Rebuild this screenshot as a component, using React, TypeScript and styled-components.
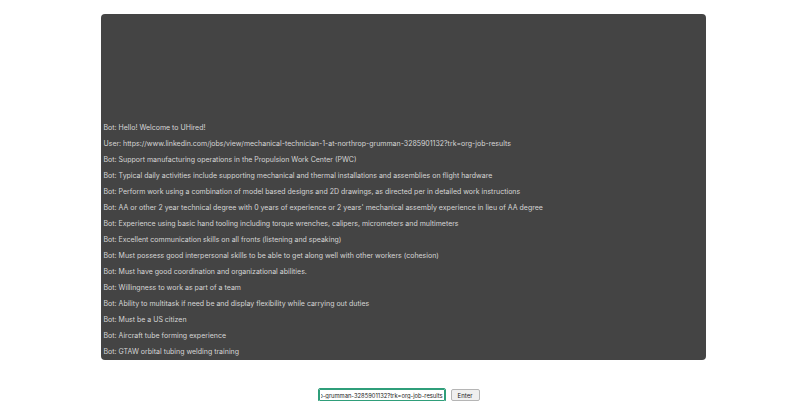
import React from "react";
import styled, { createGlobalStyle } from "styled-components";

const Global = createGlobalStyle`
  html, body { margin: 0; padding: 0; background: #ffffff; }
  body { font-family: "Inter", "Liberation Sans", sans-serif; }
`;

const Page = styled.div`
  display: flex;
  flex-direction: column;
  align-items: center;
  padding-top: 14px;
`;

const ChatPanel = styled.div`
  width: 605px;
  height: 346px;
  box-sizing: border-box;
  background: #444444;
  border-radius: 4px;
  display: flex;
  flex-direction: column;
  justify-content: flex-end;
  padding: 0 3px 0;
  overflow: hidden;
`;

const Message = styled.div`
  font-size: 7px;
  line-height: 16px;
  color: #d6d6d6;
  white-space: nowrap;
`;

const InputRow = styled.form`
  display: flex;
  align-items: center;
  gap: 6px;
  margin-top: 29px;
  margin-left: -8px;
`;

const TextInput = styled.input`
  width: 126px;
  height: 12px;
  box-sizing: border-box;
  border: 1px solid #2f9e7a;
  outline: 1px solid #2f9e7a;
  border-radius: 1px;
  padding: 0 1px;
  font-family: inherit;
  font-size: 5.8px;
  color: #222;
  background: #fff;
`;

const EnterButton = styled.button`
  height: 12px;
  width: 29px;
  padding: 0;
  border: 1px solid #b5b5b5;
  border-radius: 2px;
  background: #efefef;
  font-family: inherit;
  font-size: 6px;
  color: #222;
`;

const messages = [
  "Bot: Hello! Welcome to UHired!",
  "User: https://www.linkedin.com/jobs/view/mechanical-technician-1-at-northrop-grumman-3285901132?trk=org-job-results",
  "Bot: Support manufacturing operations in the Propulsion Work Center (PWC)",
  "Bot: Typical daily activities include supporting mechanical and thermal installations and assemblies on flight hardware",
  "Bot: Perform work using a combination of model based designs and 2D drawings, as directed per in detailed work instructions",
  "Bot: AA or other 2 year technical degree with 0 years of experience or 2 years' mechanical assembly experience in lieu of AA degree",
  "Bot: Experience using basic hand tooling including torque wrenches, calipers, micrometers and multimeters",
  "Bot: Excellent communication skills on all fronts (listening and speaking)",
  "Bot: Must possess good interpersonal skills to be able to get along well with other workers (cohesion)",
  "Bot: Must have good coordination and organizational abilities.",
  "Bot: Willingness to work as part of a team",
  "Bot: Ability to multitask if need be and display flexibility while carrying out duties",
  "Bot: Must be a US citizen",
  "Bot: Aircraft tube forming experience",
  "Bot: GTAW orbital tubing welding training",
];

export default function App() {
  const ref = React.useRef<HTMLInputElement>(null);
  React.useEffect(() => {
    const el = ref.current;
    if (el) {
      el.focus();
      el.scrollLeft = el.scrollWidth;
    }
  }, []);
  return (
    <>
      <Global />
      <Page>
        <ChatPanel>
          {messages.map((m, i) => (
            <Message key={i}>{m}</Message>
          ))}
        </ChatPanel>
        <InputRow onSubmit={(e) => e.preventDefault()}>
          <TextInput
            ref={ref}
            defaultValue="https://www.linkedin.com/jobs/view/mechanical-technician-1-at-northrop-grumman-3285901132?trk=org-job-results"
          />
          <EnterButton type="submit">Enter</EnterButton>
        </InputRow>
      </Page>
    </>
  );
}
